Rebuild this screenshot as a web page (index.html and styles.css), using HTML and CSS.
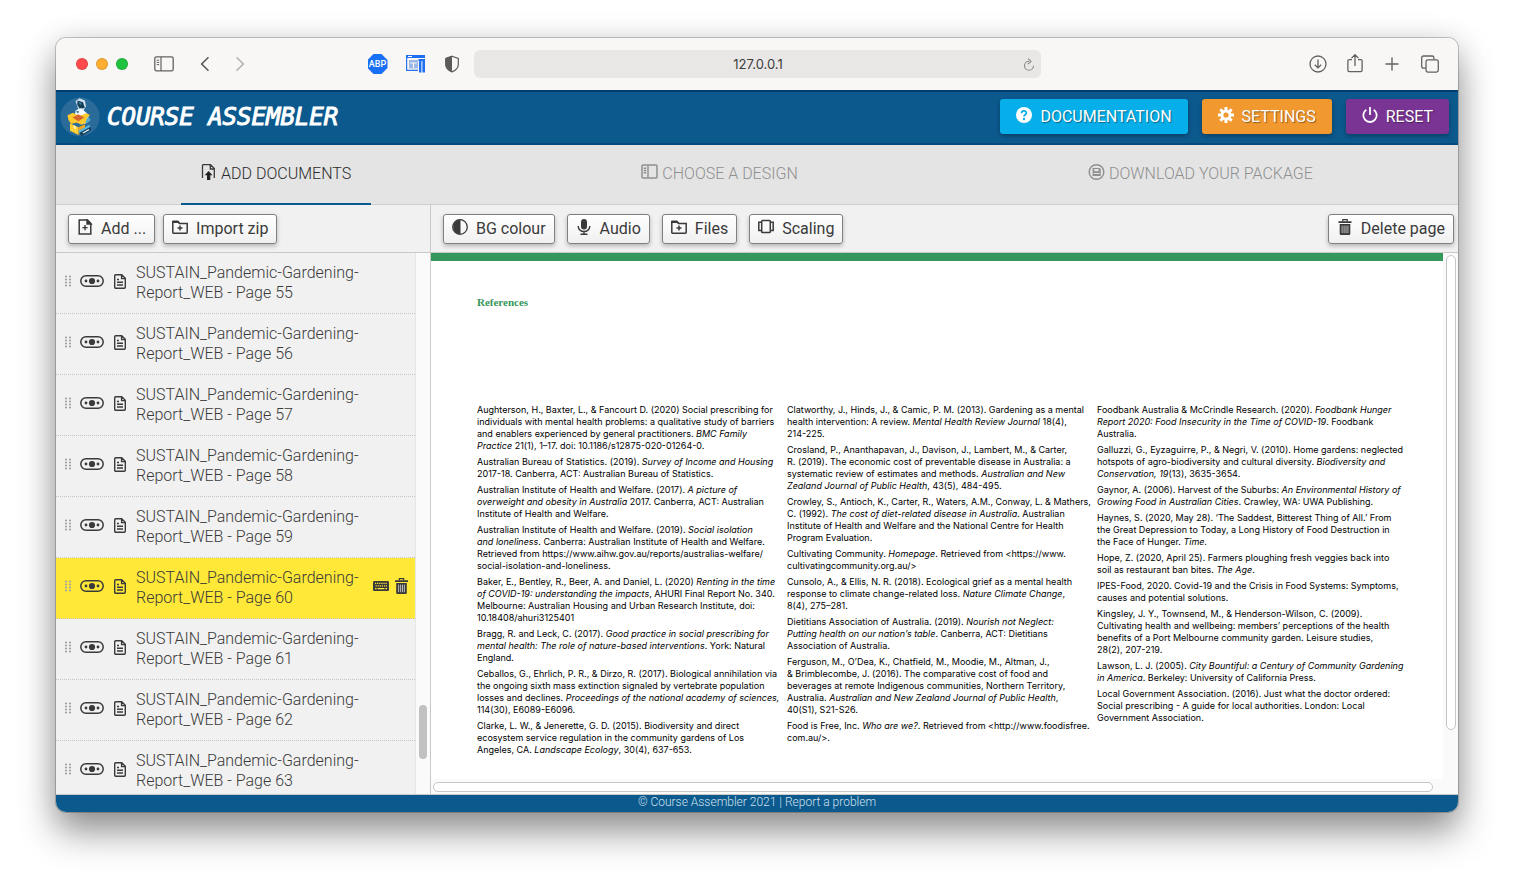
FILE: index.html
```html
<!DOCTYPE html>
<html lang="en">
<head>
<meta charset="utf-8">
<title>Course Assembler</title>
<link rel="stylesheet" href="styles.css">
</head>
<body>
<svg class="sprite" aria-hidden="true">
  <symbol id="i-grip" viewBox="0 0 8 12"><g fill="#a2a2a2"><circle cx="2" cy="1.5" r="1.1"/><circle cx="6" cy="1.5" r="1.1"/><circle cx="2" cy="4.500" r="1.1"/><circle cx="6" cy="4.500" r="1.1"/><circle cx="2" cy="7.500" r="1.1"/><circle cx="6" cy="7.500" r="1.1"/><circle cx="2" cy="10.500" r="1.1"/><circle cx="6" cy="10.500" r="1.1"/></g></symbol>
  <symbol id="i-toggle" viewBox="0 0 24 12"><rect x=".8" y=".8" width="22.4" height="10.4" rx="5.2" fill="none" stroke="currentColor" stroke-width="1.5"/><circle cx="12" cy="6" r="3.1" fill="currentColor"/><circle cx="6" cy="6" r="1.4" fill="currentColor"/><circle cx="18" cy="6" r="1.4" fill="currentColor"/></symbol>
  <symbol id="i-doc" viewBox="0 0 12 15"><path d="M1.7.7h6l3.6 3.6v9a1 1 0 0 1-1 1H1.7a1 1 0 0 1-1-1V1.7a1 1 0 0 1 1-1zM7.6 1v3.6h3.6M3 5.5h2M3 8.2h6M3 11h6" fill="none" stroke="currentColor" stroke-width="1.4"/></symbol>
  <symbol id="i-trash" viewBox="0 0 13 16"><path d="M4.3 2.6V.7h4.4v1.9" fill="none" stroke="currentColor" stroke-width="1.2"/><path d="M0 2.2h13v1.9H0zM1.2 5h10.6v9.8a1.2 1.2 0 0 1-1.2 1.2H2.4a1.2 1.2 0 0 1-1.2-1.2z" fill="currentColor"/><path d="M3.6 6.6v7.6M5.6 6.6v7.6M7.5 6.6v7.6M9.4 6.6v7.6" stroke="#ddd" stroke-width=".8"/></symbol>
  <symbol id="i-keyboard" viewBox="0 0 16 10"><rect width="16" height="10" rx="1.2" fill="currentColor"/><path d="M2 2.3h12M2.6 4.9h11.5" stroke="#ffe837" stroke-width="1.2" stroke-dasharray="1.2 .9"/><path d="M2 7.6h1.6M4.6 7.6h6.8M12.4 7.6H14" stroke="#ffe837" stroke-width="1.2"/></symbol>
  <symbol id="i-folder" viewBox="0 0 16 14"><path d="M.8 1.8h5l1.6 1.6h7.8v9.1a.7.7 0 0 1-.7.7h-13a.7.7 0 0 1-.7-.7z" fill="none" stroke="currentColor" stroke-width="1.5"/><path d="M0 1.6A1 1 0 0 1 1 .6h5.2l2 2.4H0z" fill="currentColor"/><path d="M8 5.6v5M5.5 8.1h5" stroke="currentColor" stroke-width="1.5"/></symbol>
</svg>

<div class="window">
  <header class="browser">
    <div class="browser-left">
      <div class="lights"><i class="light red"></i><i class="light amber"></i><i class="light green"></i></div>
      <button class="chrome-btn panel-btn" aria-label="Show sidebar"><svg width="20" height="16" viewBox="0 0 20 16"><rect x=".8" y=".8" width="18.4" height="14" rx="1.6" fill="none" stroke="#636261" stroke-width="1.3"/><path d="M7 1v14" stroke="#636261" stroke-width="1.2"/><path d="M2.7 4.2h2.5M2.7 6.4h2.5M2.7 8.6h2.5" stroke="#636261"/></svg></button>
      <button class="chrome-btn back" aria-label="Back"><svg width="16" height="16" viewBox="0 0 16 16"><path d="M11.5 1.3L4.7 8l6.8 6.7" fill="none" stroke="#5c5b5a" stroke-width="1.6"/></svg></button>
      <button class="chrome-btn forward" aria-label="Forward"><svg width="16" height="16" viewBox="0 0 16 16"><path d="M4.5 1.3L11.3 8l-6.8 6.7" fill="none" stroke="#b3b2b1" stroke-width="1.6"/></svg></button>
      <div class="extensions">
        <button class="abp" aria-label="Adblock Plus">ABP</button>
        <button class="chrome-btn" aria-label="Page tools"><svg width="20" height="20" viewBox="0 0 20 20"><path d="M0 1h19v3H0z" fill="#1f6ff2"/><path d="M.6 2v14.400H12" fill="none" stroke="#2673f0" stroke-width="1.200"/><path d="M2 2.500h4" stroke="#fff" stroke-width="1"/><path d="M3 6h9v8.400H3z" fill="#9cb7e4"/><path d="M4.200 9h6.600M7.500 9v5" stroke="#f8f7f6" stroke-width="1.100"/><path d="M12.500 5h6.500v2h-6.500zM13 7h2.400v11.500H13zM16.400 7H19v11.500h-2.600z" fill="#1f6ff2"/></svg></button>
        <button class="chrome-btn" aria-label="Privacy report"><svg width="16" height="18" viewBox="0 0 16 18"><path d="M8 1.2l6.300 2.300v6c0 3.400-2.400 5.800-6.300 7.400C4.100 15.300 1.700 12.900 1.700 9.500v-6z" fill="none" stroke="#5c5b5a" stroke-width="1.200"/><path d="M8 1.200v15.700C4.100 15.300 1.700 12.900 1.700 9.500v-6z" fill="#5c5b5a"/></svg></button>
      </div>
    </div>
    <div class="address">
      <input class="address-input" type="text" value="127.0.0.1" aria-label="Address">
      <button class="chrome-btn reload" aria-label="Reload"><svg width="12" height="14" viewBox="0 0 12 14"><path d="M6 3.300a4.500 4.500 0 1 0 4.500 4.500" fill="none" stroke="#8a8988" stroke-width="1.100"/><path d="M5 .6l3 2.700-3 2.700" fill="none" stroke="#8a8988" stroke-width="1.100"/></svg></button>
    </div>
    <div class="browser-right">
      <button class="chrome-btn" aria-label="Downloads"><svg width="18" height="18" viewBox="0 0 18 18"><g fill="none" stroke="#636261" stroke-width="1.300"><circle cx="9" cy="9" r="8"/><path d="M9 4.500v8.300M5.800 9.700L9 12.900l3.200-3.200"/></g></svg></button>
      <button class="chrome-btn" aria-label="Share"><svg width="18" height="20" viewBox="0 0 18 20"><g fill="none" stroke="#636261" stroke-width="1.300"><path d="M6 5.600H3.200A1.300 1.300 0 0 0 1.900 6.900v9.400a1.300 1.300 0 0 0 1.300 1.300h11.600a1.300 1.300 0 0 0 1.300-1.300V6.900a1.300 1.300 0 0 0-1.300-1.300H12M9 12V.8M5.500 4.100L9 .7l3.500 3.400"/></g></svg></button>
      <button class="chrome-btn" aria-label="New tab"><svg width="18" height="18" viewBox="0 0 18 18"><path d="M9 2.500v13M2.500 9h13" stroke="#636261" stroke-width="1.400"/></svg></button>
      <button class="chrome-btn" aria-label="Tab overview"><svg width="20" height="18" viewBox="0 0 20 18"><g fill="none" stroke="#636261" stroke-width="1.300"><rect x="6" y="4.800" width="12.300" height="12.300" rx="1.800"/><path d="M5.800 13.200H3.500a1.800 1.800 0 0 1-1.800-1.800V2.800A1.800 1.800 0 0 1 3.500 1h8.600a1.800 1.800 0 0 1 1.800 1.800v1.800"/></g></svg></button>
    </div>
  </header>

  <div class="masthead">
    <svg class="logo" width="40" height="40" viewBox="0 0 40 40" role="img" aria-label="Course Assembler logo">
      <circle cx="20" cy="20" r="19.600" fill="#2a6b9a"/>
      <path d="M15.500 4l4-2.800 5.500 2.300 1 6-2.500 4 4.500 3.500 1.500 7-5 3-8-4-2-6 4-4z" fill="#c9dfee"/>
      <path d="M17.500 3.500l5.500 1.800 1.800 5.800-5 .7-2.500-3.800z" fill="#163f56"/>
      <path d="M19 5l2 .8.500 2-1.800-.3z" fill="#3688a9"/>
      <path d="M15.600 13.200l5.500-2 5 4.500-1 3.500-6 .5-3.800-3z" fill="#f7fbff"/>
      <path d="M16 13.500l3.500 1.300-2 1.600z" fill="#24729a"/>
      <path d="M7.500 18.200l5.500-2.500 6 3.500 7-3 4 1.800-3.500 3.400 1.500 3.300-6.500 3-4.800-2.300-5.500 1.500-2.700-4z" fill="#ffca2c"/>
      <path d="M12.500 20.500l5.800-3.300 6 3.300-6 3.800z" fill="#d6672f"/>
      <path d="M10 26.500l8.500 3.800V38l-8.500-4.200z" fill="#ffcf35"/>
      <path d="M18.500 30.300l6.500-3V34l-6.500 4z" fill="#f2a51f"/>
      <path d="M13.500 28l2.500 1.200v3l-2.500-1.200z" fill="#fff0a7"/>
      <path d="M19 33.500L29 28l2.300 2-10.800 7.300-1.900-1.500z" fill="#58b6dc"/>
      <path d="M19.500 35.800l11.300-6.200.3 3.300-9 6-2.600-1.300z" fill="#15425e"/>
      <path d="M23 36l6-3.600" stroke="#ebf8ff" stroke-width="1.200"/>
      <path d="M28.300 19.500l2.300 3.600-4 3.400-.8-2.200z" fill="#52a9d2"/>
    </svg>
    <h1 class="brand">COURSE ASSEMBLER</h1>
    <div class="masthead-actions">
      <button class="action action-docs"><svg width="16" height="16" viewBox="0 0 16 16"><circle cx="8" cy="8" r="8" fill="#fff"/><path d="M5.600 6.200C5.600 3 10.400 3.200 10.300 5.900 10.300 7.700 8 7.600 8 9.600" fill="none" stroke="#06aeea" stroke-width="1.800"/><circle cx="8" cy="12" r="1.200" fill="#06aeea"/></svg>DOCUMENTATION</button>
      <button class="action action-settings"><svg width="16" height="16" viewBox="0 0 16 16"><g stroke="#fff" stroke-width="3"><path d="M8 0v16M0 8h16M2.300 2.300l11.400 11.400M13.700 2.300L2.300 13.700"/></g><circle cx="8" cy="8" r="5.500" fill="#fff"/><circle cx="8" cy="8" r="2.600" fill="#f1982f"/></svg>SETTINGS</button>
      <button class="action action-reset"><svg width="16" height="16" viewBox="0 0 16 16"><path d="M4.300 2.700a6.700 6.700 0 1 0 7.400 0M8 0v8" fill="none" stroke="#fff" stroke-width="1.800"/></svg>RESET</button>
    </div>
  </div>

  <nav class="tabs">
    <a class="tab tab-active" href="#documents"><svg width="16" height="17" viewBox="0 0 16 17"><path d="M1.500 14V1.200A1.200 1.200 0 0 1 2.700.7H9.500l3.800 3.800V14M9.300 1v4h4" fill="none" stroke="#3a3a3a" stroke-width="1.300"/><path d="M7.600 7l3.900 4.200H9.300V16H6v-4.800H3.700z" fill="#222"/></svg>ADD DOCUMENTS</a>
    <a class="tab" href="#design"><svg width="17" height="16" viewBox="0 0 17 16"><rect x="1" y="1" width="15" height="13" rx="1" fill="none" stroke="#8f8f8f" stroke-width="1.500"/><path d="M7 1.500v12M2.700 4.200h2.500M2.700 6.500h2.500M2.700 8.800h2.500" stroke="#8f8f8f" stroke-width="1.400"/></svg>CHOOSE A DESIGN</a>
    <a class="tab" href="#download"><svg width="17" height="16" viewBox="0 0 17 16"><circle cx="8.500" cy="8" r="7.300" fill="none" stroke="#8f8f8f" stroke-width="1.400"/><path d="M4.600 4h6.900l1.200 1.200V12H4.600z" fill="#8f8f8f"/><path d="M6.300 5h4.300v2.200H6.300zM5.600 9h6v.9h-6z" fill="#e4e4e4"/></svg>DOWNLOAD YOUR PACKAGE</a>
  </nav>

  <div class="workspace">
    <aside class="sidebar">
      <div class="toolbar toolbar-side">
        <button class="tool"><svg width="16" height="16" viewBox="0 0 16 16"><path d="M2.200 1h8.300l3.300 3.300V15H2.200z" fill="none" stroke="currentColor" stroke-width="1.500"/><path d="M10 1v4h4zM8 6v5.200M5.400 8.600h5.200" fill="currentColor" stroke="currentColor" stroke-width="1.400"/></svg>Add ...</button>
        <button class="tool"><svg width="16" height="16"><use href="#i-folder"/></svg>Import zip</button>
      </div>
      <div class="list-area">
        <ul class="pages">
          <li class="page"><svg class="grip"><use href="#i-grip"/></svg><button class="icon-btn" aria-label="Visibility"><svg class="toggle"><use href="#i-toggle"/></svg></button><svg class="doc"><use href="#i-doc"/></svg><a class="page-name" href="#p55">SUSTAIN_Pandemic-Gardening-<br>Report_WEB - Page 55</a></li>
          <li class="page"><svg class="grip"><use href="#i-grip"/></svg><button class="icon-btn" aria-label="Visibility"><svg class="toggle"><use href="#i-toggle"/></svg></button><svg class="doc"><use href="#i-doc"/></svg><a class="page-name" href="#p56">SUSTAIN_Pandemic-Gardening-<br>Report_WEB - Page 56</a></li>
          <li class="page"><svg class="grip"><use href="#i-grip"/></svg><button class="icon-btn" aria-label="Visibility"><svg class="toggle"><use href="#i-toggle"/></svg></button><svg class="doc"><use href="#i-doc"/></svg><a class="page-name" href="#p57">SUSTAIN_Pandemic-Gardening-<br>Report_WEB - Page 57</a></li>
          <li class="page"><svg class="grip"><use href="#i-grip"/></svg><button class="icon-btn" aria-label="Visibility"><svg class="toggle"><use href="#i-toggle"/></svg></button><svg class="doc"><use href="#i-doc"/></svg><a class="page-name" href="#p58">SUSTAIN_Pandemic-Gardening-<br>Report_WEB - Page 58</a></li>
          <li class="page"><svg class="grip"><use href="#i-grip"/></svg><button class="icon-btn" aria-label="Visibility"><svg class="toggle"><use href="#i-toggle"/></svg></button><svg class="doc"><use href="#i-doc"/></svg><a class="page-name" href="#p59">SUSTAIN_Pandemic-Gardening-<br>Report_WEB - Page 59</a></li>
          <li class="page page-current"><svg class="grip"><use href="#i-grip"/></svg><button class="icon-btn" aria-label="Visibility"><svg class="toggle"><use href="#i-toggle"/></svg></button><svg class="doc"><use href="#i-doc"/></svg><a class="page-name" href="#p60">SUSTAIN_Pandemic-Gardening-<br>Report_WEB - Page 60</a><span class="page-tools"><button class="icon-btn" aria-label="Rename"><svg width="16" height="10"><use href="#i-keyboard"/></svg></button><button class="icon-btn" aria-label="Delete"><svg width="13" height="16"><use href="#i-trash"/></svg></button></span></li>
          <li class="page"><svg class="grip"><use href="#i-grip"/></svg><button class="icon-btn" aria-label="Visibility"><svg class="toggle"><use href="#i-toggle"/></svg></button><svg class="doc"><use href="#i-doc"/></svg><a class="page-name" href="#p61">SUSTAIN_Pandemic-Gardening-<br>Report_WEB - Page 61</a></li>
          <li class="page"><svg class="grip"><use href="#i-grip"/></svg><button class="icon-btn" aria-label="Visibility"><svg class="toggle"><use href="#i-toggle"/></svg></button><svg class="doc"><use href="#i-doc"/></svg><a class="page-name" href="#p62">SUSTAIN_Pandemic-Gardening-<br>Report_WEB - Page 62</a></li>
          <li class="page"><svg class="grip"><use href="#i-grip"/></svg><button class="icon-btn" aria-label="Visibility"><svg class="toggle"><use href="#i-toggle"/></svg></button><svg class="doc"><use href="#i-doc"/></svg><a class="page-name" href="#p63">SUSTAIN_Pandemic-Gardening-<br>Report_WEB - Page 63</a></li>
        </ul>
        <div class="list-track"><div class="list-thumb"></div></div>
      </div>
    </aside>

    <main class="editor">
      <div class="toolbar toolbar-main">
        <button class="tool"><svg width="16" height="16" viewBox="0 0 16 16"><circle cx="8" cy="8" r="7.300" fill="none" stroke="currentColor" stroke-width="1.300"/><path d="M8.500.7a7.300 7.300 0 1 0 0 14.600z" fill="currentColor"/></svg>BG colour</button>
        <button class="tool"><svg width="16" height="16" viewBox="0 0 16 16"><rect x="5" y="0" width="6" height="10.500" rx="3" fill="currentColor"/><path d="M2.300 7v.8a5.700 4.700 0 0 0 11.400 0V7M8 12.500v3M4.500 15.300h7" fill="none" stroke="currentColor" stroke-width="1.400"/></svg>Audio</button>
        <button class="tool"><svg width="16" height="16"><use href="#i-folder"/></svg>Files</button>
        <button class="tool"><svg width="16" height="16" viewBox="0 0 16 16"><g fill="none" stroke="currentColor" stroke-width="1.500"><rect x="3.700" y="1.500" width="8.600" height="12" rx=".8"/><path d="M3.500 3.300H.8v8.200h2.700M12.500 3.300h2.700v8.200h-2.700"/></g></svg>Scaling</button>
        <button class="tool tool-delete"><svg width="16" height="16"><use href="#i-trash"/></svg>Delete page</button>
      </div>
      <div class="preview">
        <article class="sheet">
          <h2 class="sheet-title">References</h2>
          <div class="columns">
            <div class="column">
              <p>Aughterson, H., Baxter, L., &amp; Fancourt D. (2020) Social prescribing for<br>individuals with mental health problems: a qualitative study of barriers<br>and enablers experienced by general practitioners. <em>BMC Family<br>Practice</em> 21(1), 1–17. doi: 10.1186/s12875-020-01264-0.</p>
              <p>Australian Bureau of Statistics. (2019). <em>Survey of Income and Housing</em><br>2017-18. Canberra, ACT: Australian Bureau of Statistics.</p>
              <p>Australian Institute of Health and Welfare. (2017). <em>A picture of<br>overweight and obesity in Australia</em> 2017. Canberra, ACT: Australian<br>Institute of Health and Welfare.</p>
              <p>Australian Institute of Health and Welfare. (2019). <em>Social isolation<br>and loneliness</em>. Canberra: Australian Institute of Health and Welfare.<br>Retrieved from https://www.aihw.gov.au/reports/australias-welfare/<br>social-isolation-and-loneliness.</p>
              <p>Baker, E., Bentley, R., Beer, A. and Daniel, L. (2020) <em>Renting in the time<br>of COVID-19: understanding the impacts</em>, AHURI Final Report No. 340.<br>Melbourne: Australian Housing and Urban Research Institute, doi:<br>10.18408/ahuri3125401</p>
              <p>Bragg, R. and Leck, C. (2017). <em>Good practice in social prescribing for<br>mental health: The role of nature-based interventions</em>. York: Natural<br>England.</p>
              <p>Ceballos, G., Ehrlich, P. R., &amp; Dirzo, R. (2017). Biological annihilation via<br>the ongoing sixth mass extinction signaled by vertebrate population<br>losses and declines. <em>Proceedings of the national academy of sciences,</em><br>114(30), E6089-E6096.</p>
              <p>Clarke, L. W., &amp; Jenerette, G. D. (2015). Biodiversity and direct<br>ecosystem service regulation in the community gardens of Los<br>Angeles, CA. <em>Landscape Ecology</em>, 30(4), 637-653.</p>
            </div>
            <div class="column">
              <p>Clatworthy, J., Hinds, J., &amp; Camic, P. M. (2013). Gardening as a mental<br>health intervention: A review. <em>Mental Health Review Journal</em> 18(4),<br>214-225.</p>
              <p>Crosland, P., Ananthapavan, J., Davison, J., Lambert, M., &amp; Carter,<br>R. (2019). The economic cost of preventable disease in Australia: a<br>systematic review of estimates and methods. <em>Australian and New<br>Zealand Journal of Public Health</em>, 43(5), 484-495.</p>
              <p>Crowley, S., Antioch, K., Carter, R., Waters, A.M., Conway, L. &amp; Mathers,<br>C. (1992). <em>The cost of diet-related disease in Australia</em>. Australian<br>Institute of Health and Welfare and the National Centre for Health<br>Program Evaluation.</p>
              <p>Cultivating Community. <em>Homepage</em>. Retrieved from &lt;https://www.<br>cultivatingcommunity.org.au/&gt;</p>
              <p>Cunsolo, A., &amp; Ellis, N. R. (2018). Ecological grief as a mental health<br>response to climate change-related loss. <em>Nature Climate Change</em>,<br>8(4), 275–281.</p>
              <p>Dietitians Association of Australia. (2019). <em>Nourish not Neglect:<br>Putting health on our nation’s table</em>. Canberra, ACT: Dietitians<br>Association of Australia.</p>
              <p>Ferguson, M., O’Dea, K., Chatfield, M., Moodie, M., Altman, J.,<br>&amp; Brimblecombe, J. (2016). The comparative cost of food and<br>beverages at remote Indigenous communities, Northern Territory,<br>Australia. <em>Australian and New Zealand Journal of Public Health</em>,<br>40(S1), S21-S26.</p>
              <p>Food is Free, Inc. <em>Who are we?</em>. Retrieved from &lt;http://www.foodisfree.<br>com.au/&gt;.</p>
            </div>
            <div class="column">
              <p>Foodbank Australia &amp; McCrindle Research. (2020). <em>Foodbank Hunger<br>Report 2020: Food Insecurity in the Time of COVID-19</em>. Foodbank<br>Australia.</p>
              <p>Galluzzi, G., Eyzaguirre, P., &amp; Negri, V. (2010). Home gardens: neglected<br>hotspots of agro-biodiversity and cultural diversity. <em>Biodiversity and<br>Conservation, 19</em>(13), 3635-3654.</p>
              <p>Gaynor, A. (2006). Harvest of the Suburbs: <em>An Environmental History of<br>Growing Food in Australian Cities</em>. Crawley, WA: UWA Publishing.</p>
              <p>Haynes, S. (2020, May 28). ‘The Saddest, Bitterest Thing of All.’ From<br>the Great Depression to Today, a Long History of Food Destruction in<br>the Face of Hunger. <em>Time.</em></p>
              <p>Hope, Z. (2020, April 25). Farmers ploughing fresh veggies back into<br>soil as restaurant ban bites. <em>The Age</em>.</p>
              <p>IPES-Food, 2020. Covid-19 and the Crisis in Food Systems: Symptoms,<br>causes and potential solutions.</p>
              <p>Kingsley, J. Y., Townsend, M., &amp; Henderson-Wilson, C. (2009).<br>Cultivating health and wellbeing: members’ perceptions of the health<br>benefits of a Port Melbourne community garden. Leisure studies,<br>28(2), 207-219.</p>
              <p>Lawson, L. J. (2005). <em>City Bountiful: a Century of Community Gardening<br>in America</em>. Berkeley: University of California Press.</p>
              <p>Local Government Association. (2016). Just what the doctor ordered:<br>Social prescribing - A guide for local authorities. London: Local<br>Government Association.</p>
            </div>
          </div>
        </article>
        <div class="v-track"><div class="v-thumb"></div></div>
        <div class="h-track"><div class="h-thumb"></div></div>
      </div>
    </main>
  </div>

  <footer class="footer">© Course Assembler 2021 | <a class="footer-link" href="#report">Report a problem</a></footer>
</div>
</body>
</html>
```
FILE: styles.css
```css
* { box-sizing: border-box; }

body {
  margin: 0;
  height: 100vh;
  padding: 38px 56px 74px;
  overflow: hidden;
  background: #fff;
  font-family: Roboto, "Liberation Sans", sans-serif;
  font-size: 16px;
  color: #3a3a3a;
}

button { font: inherit; color: inherit; cursor: pointer; }
a { color: inherit; text-decoration: none; }
svg { display: block; flex: none; }
.sprite { position: absolute; width: 0; height: 0; }

.window {
  display: flex;
  flex-direction: column;
  height: 100%;
  border-radius: 10px;
  overflow: hidden;
  box-shadow: 0 0 0 1px rgba(0, 0, 0, .2), 0 20px 36px rgba(0, 0, 0, .42), 0 0 30px rgba(0, 0, 0, .1);
}

/* Browser chrome */
.browser {
  display: grid;
  grid-template-columns: 1fr 567px 1fr;
  align-items: center;
  flex: none;
  height: 52px;
  background: #f8f7f6;
}
.browser-left { display: flex; align-items: center; padding: 0 14px 0 20px; }
.lights { display: flex; gap: 8px; }
.light { width: 12px; height: 12px; border-radius: 50%; border: 1px solid rgba(0, 0, 0, .12); }
.red { background: #ff4a4c; }
.amber { background: #ffae32; }
.green { background: #1fc33f; }
.chrome-btn { padding: 0; border: 0; background: none; }
.panel-btn { margin-left: 26px; }
.back { margin-left: 23px; }
.forward { margin-left: 19px; }
.extensions { display: flex; align-items: center; gap: 18px; margin-left: auto; }
.abp {
  width: 20px;
  height: 20px;
  padding: 0;
  border: 0;
  background: #1a70f5;
  clip-path: polygon(30% 0, 70% 0, 100% 30%, 100% 70%, 70% 100%, 30% 100%, 0 70%, 0 30%);
  color: #fff;
  font-size: 9px;
  font-weight: 500;
  line-height: 20px;
}
.address { display: flex; align-items: center; height: 28px; padding: 0 6px 0 20px; border-radius: 6px; background: #e8e7e6; }
.address-input { flex: 1; min-width: 0; border: 0; padding: 0; background: none; text-align: center; font: 13px Inter, sans-serif; color: #3e3d3d; }
.reload svg { margin-top: 2px; }
.browser-right { display: flex; align-items: center; justify-content: flex-end; gap: 19px; padding-right: 18px; }

/* Application header */
.masthead {
  display: flex;
  align-items: center;
  flex: none;
  height: 55px;
  padding: 0 9px 2px 4px;
  border-top: 2px solid #023d70;
  border-bottom: 2px solid #074a7c;
  background: #0c598e;
}
.brand { margin: 0 0 0 7px; color: #fff; font: italic 400 24px/32px "DejaVu Sans Mono", monospace; -webkit-text-stroke: 1px #fff; }
.masthead-actions { display: flex; gap: 14px; margin-left: auto; }
.action {
  display: flex;
  align-items: center;
  gap: 8px;
  height: 35px;
  padding: 0 16px;
  border: 0;
  border-radius: 3px;
  color: #fff;
  text-shadow: 1px 1px 1px rgba(0, 0, 0, .4);
  box-shadow: 0 2px 4px rgba(0, 0, 0, .3);
}
.action svg, .tool svg { margin-bottom: 3px; }
.action-docs { background: #06aeea; }
.action-settings { background: #f1982f; }
.action-reset { background: #7a3594; }

/* Step tabs */
.tabs {
  display: flex;
  justify-content: space-around;
  flex: none;
  height: 60px;
  border-bottom: 1px solid #cfcfcf;
  background: #e4e4e4;
}
.tab {
  display: flex;
  align-items: center;
  gap: 4px;
  height: 60px;
  padding: 0 20px 2px;
  border-bottom: 2px solid transparent;
  color: #8f8f8f;
  font-weight: 300;
}
.tab svg { margin-bottom: 2px; }
.tab-active { color: #2b2b2b; border-color: #0c598e; }

/* Workspace */
.workspace { display: flex; flex: 1; min-height: 0; border-bottom: 1px solid #c9c9c9; background: #f1f1f1; }
.sidebar { display: flex; flex-direction: column; flex: none; width: 375px; border-right: 1px solid #c9c9c9; }
.editor { display: flex; flex-direction: column; flex: 1; min-width: 0; }
.toolbar { display: flex; align-items: center; flex: none; height: 48px; border-bottom: 1px solid #c9c9c9; }
.toolbar-side { gap: 8px; padding: 0 12px; }
.toolbar-main { gap: 12px; padding: 0 4px 0 12px; }
.tool {
  display: flex;
  align-items: center;
  gap: 8px;
  height: 30px;
  padding: 0 8px;
  border: 1px solid #808080;
  border-radius: 3px;
  background: linear-gradient(#fff, #f0f0f0);
  box-shadow: 0 2px 4px rgba(0, 0, 0, .25);
}
.tool-delete { margin-left: auto; }

.list-area { display: flex; flex: 1; min-height: 0; overflow: hidden; }
.pages { flex: 1; margin: 0; padding: 0; list-style: none; }
.page { display: flex; align-items: center; height: 61px; padding: 0 7px 4px 8px; border-bottom: 1px dotted #c4c4c4; }
.page-current { background: #ffe837; }
.grip { width: 8px; height: 12px; }
.toggle { width: 24px; height: 12px; }
.doc { width: 12px; height: 15px; margin-left: 10px; }
.icon-btn { display: block; padding: 0; border: 0; background: none; }
.grip + .icon-btn { margin-left: 8px; }
.page-name { margin-left: 10px; padding-top: 4px; line-height: 20px; font-weight: 300; white-space: nowrap; }
.page-tools { display: flex; align-items: center; gap: 6px; margin-left: auto; }
.list-track { display: flex; align-items: flex-end; justify-content: center; width: 15px; padding-bottom: 35px; border-left: 1px solid #e6e6e6; background: #fafafa; }
.list-thumb { width: 8px; height: 54px; border-radius: 4px; background: #c1c1c1; }

/* Document preview */
.preview { display: grid; grid-template: 1fr 15px / 1fr 15px; flex: 1; min-height: 0; background: #fafafa; }
.sheet { min-height: 0; overflow: hidden; padding: 33px 46px 0; border-top: 8px solid #36975c; background: #fff; }
.sheet-title { margin: 0 0 94px; color: #36975c; font: 700 11px/16px "Liberation Serif", serif; }
.columns { display: grid; grid-template-columns: repeat(3, 1fr); gap: 10px; }
.column { min-width: 0; color: #000; font-family: Inter, Roboto, sans-serif; font-size: 9px; line-height: 12px; white-space: nowrap; }
.column p { margin: 0 0 4px; }
.v-track { padding: 2px 2px 49px 3px; }
.v-thumb { height: 100%; border: 1px solid #c6c6c6; border-radius: 5px; background: #fff; }
.h-track { padding: 3px 10px 2px 2px; }
.h-thumb { height: 10px; border: 1px solid #c6c6c6; border-radius: 5px; background: #fff; }

.footer { flex: none; height: 17px; background: #0c598e; color: #cfe0ec; text-align: center; font-size: 12px; font-weight: 300; line-height: 15px; }
```
